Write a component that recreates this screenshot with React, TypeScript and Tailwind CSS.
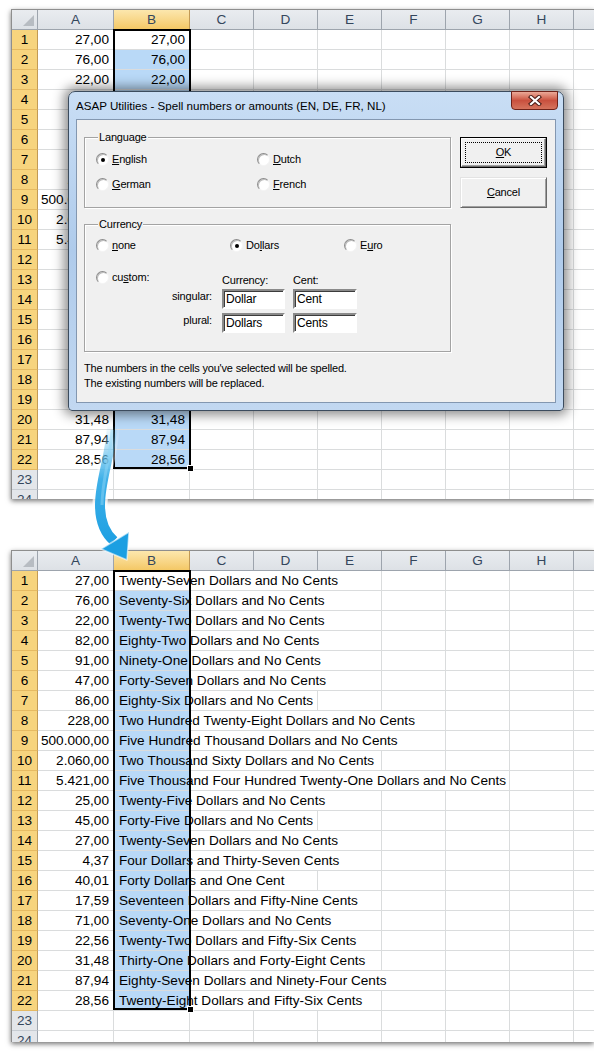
import React from "react";

type Row = { a: string; words: string; reach: number };

// reach: last column (after B) the spelled text runs into: C=1, D=2, E=3, F=4, G=5
const rows: Row[] = [
  { a: "27,00", words: "Twenty-Seven Dollars and No Cents", reach: 3 },
  { a: "76,00", words: "Seventy-Six Dollars and No Cents", reach: 3 },
  { a: "22,00", words: "Twenty-Two Dollars and No Cents", reach: 3 },
  { a: "82,00", words: "Eighty-Two Dollars and No Cents", reach: 3 },
  { a: "91,00", words: "Ninety-One Dollars and No Cents", reach: 3 },
  { a: "47,00", words: "Forty-Seven Dollars and No Cents", reach: 3 },
  { a: "86,00", words: "Eighty-Six Dollars and No Cents", reach: 2 },
  { a: "228,00", words: "Two Hundred Twenty-Eight Dollars and No Cents", reach: 4 },
  { a: "500.000,00", words: "Five Hundred Thousand Dollars and No Cents", reach: 4 },
  { a: "2.060,00", words: "Two Thousand Sixty Dollars and No Cents", reach: 3 },
  { a: "5.421,00", words: "Five Thousand Four Hundred Twenty-One Dollars and No Cents", reach: 5 },
  { a: "25,00", words: "Twenty-Five Dollars and No Cents", reach: 3 },
  { a: "45,00", words: "Forty-Five Dollars and No Cents", reach: 2 },
  { a: "27,00", words: "Twenty-Seven Dollars and No Cents", reach: 3 },
  { a: "4,37", words: "Four Dollars and Thirty-Seven Cents", reach: 3 },
  { a: "40,01", words: "Forty Dollars and One Cent", reach: 2 },
  { a: "17,59", words: "Seventeen Dollars and Fifty-Nine Cents", reach: 3 },
  { a: "71,00", words: "Seventy-One Dollars and No Cents", reach: 3 },
  { a: "22,56", words: "Twenty-Two Dollars and Fifty-Six Cents", reach: 3 },
  { a: "31,48", words: "Thirty-One Dollars and Forty-Eight Cents", reach: 3 },
  { a: "87,94", words: "Eighty-Seven Dollars and Ninety-Four Cents", reach: 4 },
  { a: "28,56", words: "Twenty-Eight Dollars and Fifty-Six Cents", reach: 3 },
];

const rest = ["C", "D", "E", "F", "G", "H", "I"];

function HeaderRow() {
  return (
    <div className="flex h-[20px] border-b border-[#9da4ad] bg-gradient-to-b from-[#e9ecf0] to-[#dde1e6] text-[#34465c]">
      <div className="flex h-full w-[26px] shrink-0 items-end justify-end border-r border-[#9da4ad] pb-[3px] pr-[3px]">
        <div className="h-0 w-0 border-b-[11px] border-l-[11px] border-b-[#b7bcc2] border-l-transparent" />
      </div>
      <div className="flex h-full w-[76px] shrink-0 items-center justify-center border-r border-[#9da4ad]">A</div>
      <div className="flex h-full w-[76px] shrink-0 items-center justify-center border-r border-[#c29a55] bg-gradient-to-b from-[#fce7ad] to-[#f4c865]">
        B
      </div>
      {rest.map((c) => (
        <div key={c} className="flex h-full w-[64px] shrink-0 items-center justify-center border-r border-[#9da4ad]">
          {c}
        </div>
      ))}
    </div>
  );
}

function RowHead({ n, selected }: { n: number; selected: boolean }) {
  return (
    <div
      className={
        selected
          ? "flex h-full w-[26px] shrink-0 items-center justify-center border-b border-r border-b-[#e6ba62] border-r-[#c29a55] bg-[#f7d47e]"
          : "flex h-full w-[26px] shrink-0 items-center justify-center border-b border-r border-b-[#c7ccd2] border-r-[#9da4ad] bg-[#e3e6ea] text-[#34465c]"
      }
    >
      {n}
    </div>
  );
}

function Sheet({ spelled }: { spelled: boolean }) {
  return (
    <div className="relative ml-[11px] w-[583px] overflow-hidden border-l border-t border-[#8e8e8e] bg-white text-[13.6px] leading-[19px] text-black shadow-[0_2px_5px_rgba(0,0,0,0.55)]">
      <div className={spelled ? "h-[491px]" : "h-[489px]"}>
        <HeaderRow />
        {rows.map((r, i) => (
          <div key={i} className="flex h-[20px]">
            <RowHead n={i + 1} selected />
            <div className="h-full w-[76px] shrink-0 border-b border-r border-[#dadcdd] pr-[4px] text-right">{r.a}</div>
            {spelled ? (
              <div
                className={
                  i === 0
                    ? "h-full w-[76px] shrink-0 overflow-visible whitespace-nowrap border-b border-[#dadcdd] bg-white pl-[5px]"
                    : "h-full w-[76px] shrink-0 overflow-visible whitespace-nowrap border-b border-[#dadcdd] bg-[#b9d9f7] pl-[5px]"
                }
              >
                {r.words}
              </div>
            ) : (
              <div
                className={
                  i === 0
                    ? "h-full w-[76px] shrink-0 border-b border-r border-[#dadcdd] bg-white pr-[4px] text-right"
                    : "h-full w-[76px] shrink-0 border-b border-r border-[#dadcdd] bg-[#b9d9f7] pr-[4px] text-right"
                }
              >
                {r.a}
              </div>
            )}
            {rest.map((c, k) => (
              <div
                key={c}
                className={
                  spelled && k + 1 < r.reach
                    ? "h-full w-[64px] shrink-0 border-b border-[#dadcdd]"
                    : "h-full w-[64px] shrink-0 border-b border-r border-[#dadcdd]"
                }
              />
            ))}
          </div>
        ))}
        {[23, 24].map((n) => (
          <div key={n} className="flex h-[20px]">
            <RowHead n={n} selected={false} />
            <div className="h-full w-[76px] shrink-0 border-b border-r border-[#dadcdd]" />
            <div className="h-full w-[76px] shrink-0 border-b border-r border-[#dadcdd]" />
            {rest.map((c) => (
              <div key={c} className="h-full w-[64px] shrink-0 border-b border-r border-[#dadcdd]" />
            ))}
          </div>
        ))}
      </div>
      {/* selection frame + fill handle */}
      <div className="pointer-events-none absolute left-[101px] top-[19px] h-[440px] w-[78px] border-2 border-black" />
      <div className="absolute left-[175px] top-[455px] h-[7px] w-[7px] border border-white bg-black" />
    </div>
  );
}

function Radio({ checked }: { checked?: boolean }) {
  return (
    <span className="flex h-[13px] w-[13px] shrink-0 items-center justify-center rounded-full border border-b-[#f4f4f4] border-l-[#8c8c8c] border-r-[#f4f4f4] border-t-[#8c8c8c] bg-white shadow-[inset_1px_1px_0_#bdbdbd]">
      {checked && <span className="h-[4px] w-[4px] rounded-full bg-black" />}
    </span>
  );
}

function Option({ children, checked }: { children: React.ReactNode; checked?: boolean }) {
  return (
    <div className="flex h-[13px] items-center gap-[3px] leading-[13px]">
      <Radio checked={checked} />
      <span>{children}</span>
    </div>
  );
}

function Field({ value }: { value: string }) {
  return (
    <div className="flex h-[20px] items-center border-2 border-b-white border-l-[#8a8a8a] border-r-white border-t-[#8a8a8a] bg-white pl-[2px] text-[12px] shadow-[inset_1px_1px_0_#3c3c3c]">
      {value}
    </div>
  );
}

function Dialog() {
  return (
    <div className="absolute left-[68px] top-[91px] h-[320px] w-[496px] rounded-b-[4px] rounded-t-[7px] border border-[#3c4c5e] bg-gradient-to-b from-[#c9def5] via-[#afcbeb] to-[#c2d8f1] font-['Liberation_Sans',Arial,sans-serif] text-[11px] tracking-[-0.18px] text-black shadow-[0_0_12px_4px_rgba(0,0,0,0.45)]">
      <div className="flex h-[27px] items-center pl-[7px] text-[11.6px] tracking-normal">
        ASAP Utilities - Spell numbers or amounts (EN, DE, FR, NL)
      </div>
      <div className="absolute right-[5px] top-[-1px] flex h-[19px] w-[47px] items-center justify-center rounded-b-[4px] border border-[#6f2219] bg-gradient-to-b from-[#eaa998] via-[#c9503e] to-[#d5735d]">
        <svg width="14" height="11" viewBox="0 0 14 11">
          <path d="M3 2 L11 9 M11 2 L3 9" stroke="#4a1c16" strokeWidth="4.2" strokeLinecap="square" />
          <path d="M3 2 L11 9 M11 2 L3 9" stroke="#fff" strokeWidth="2.2" strokeLinecap="square" />
        </svg>
      </div>
      <div className="mx-[7px] flex h-[284px] gap-[9px] border border-[#8397b0] bg-[#f0f0f0] pl-[7px] pt-[17px]">
        <div className="w-[367px]">
          <div className="relative h-[71px] border border-[#a3a3a3] shadow-[inset_1px_1px_0_#fff,1px_1px_0_#fff]">
            <span className="absolute left-[13px] top-[-8px] bg-[#f0f0f0] px-px leading-[14px]">Language</span>
            <div className="grid grid-cols-[161px_1fr] gap-y-[12px] pl-[11px] pt-[15px]">
              <Option checked>
                <u>E</u>nglish
              </Option>
              <Option>
                <u>D</u>utch
              </Option>
              <Option>
                <u>G</u>erman
              </Option>
              <Option>
                <u>F</u>rench
              </Option>
            </div>
          </div>
          <div className="relative mt-[16px] h-[128px] border border-[#a3a3a3] shadow-[inset_1px_1px_0_#fff,1px_1px_0_#fff]">
            <span className="absolute left-[13px] top-[-8px] bg-[#f0f0f0] px-px leading-[14px]">Currency</span>
            <div className="grid grid-cols-[134px_114px_1fr] pl-[11px] pt-[14px]">
              <Option>
                <u>n</u>one
              </Option>
              <Option checked>
                Do<u>l</u>lars
              </Option>
              <Option>
                E<u>u</u>ro
              </Option>
            </div>
            <div className="mt-[19px] grid grid-cols-[126px_71px_64px] grid-rows-[18px_22px_24px] pl-[11px]">
              <Option>
                cu<u>s</u>tom:
              </Option>
              <span className="mt-[2px] leading-[14px]">Currency:</span>
              <span className="mt-[2px] leading-[14px]">Cent:</span>
              <span className="pr-[10px] text-right leading-[14px]">singular:</span>
              <div className="w-[63px]">
                <Field value="Dollar" />
              </div>
              <Field value="Cent" />
              <span className="mt-[2px] pr-[10px] text-right leading-[14px]">plural:</span>
              <div className="mt-[2px] w-[63px]">
                <Field value="Dollars" />
              </div>
              <div className="mt-[2px]">
                <Field value="Cents" />
              </div>
            </div>
          </div>
          <p className="mt-[9px] leading-[15px]">
            The numbers in the cells you've selected will be spelled.
            <br />
            The existing numbers will be replaced.
          </p>
        </div>
        <div className="flex flex-col gap-[9px]">
          <div className="h-[31px] w-[87px] border border-black">
            <div className="flex h-full w-full items-center justify-center border border-b-[#696969] border-l-white border-r-[#696969] border-t-white shadow-[inset_-1px_-1px_0_#a0a0a0]">
              <div className="flex h-[21px] w-[77px] items-center justify-center border border-dotted border-black">
                <u>O</u>K
              </div>
            </div>
          </div>
          <div className="flex h-[31px] w-[87px] items-center justify-center border border-b-[#696969] border-l-[#e3e3e3] border-r-[#696969] border-t-[#e3e3e3] shadow-[inset_1px_1px_0_#fff,inset_-1px_-1px_0_#a0a0a0]">
            <u>C</u>ancel
          </div>
        </div>
      </div>
    </div>
  );
}

function Arrow() {
  const d = "M112 426 C111 455 100 480 100 505 C100 522 106 534 114 541";
  return (
    <svg className="pointer-events-none absolute left-0 top-0" width="594" height="1053" viewBox="0 0 594 1053">
      <defs>
        <linearGradient id="stem" x1="0" y1="425" x2="0" y2="545" gradientUnits="userSpaceOnUse">
          <stop offset="0" stopColor="#2aa8e6" stopOpacity="0" />
          <stop offset="0.45" stopColor="#2aa8e6" stopOpacity="0.9" />
          <stop offset="1" stopColor="#1c9fe2" stopOpacity="1" />
        </linearGradient>
        <linearGradient id="halo" x1="0" y1="425" x2="0" y2="545" gradientUnits="userSpaceOnUse">
          <stop offset="0" stopColor="#fff" stopOpacity="0" />
          <stop offset="0.5" stopColor="#fff" stopOpacity="0.7" />
          <stop offset="1" stopColor="#fff" stopOpacity="0.8" />
        </linearGradient>
      </defs>
      <path d={d} fill="none" stroke="url(#halo)" strokeWidth="15" />
      <path d={d} fill="none" stroke="url(#stem)" strokeWidth="10" />
      <path d="M112 430 C111 455 102 480 102 505" fill="none" stroke="#8fd6f6" strokeOpacity="0.5" strokeWidth="3" />
      <polygon points="101,549 129,532 127,560" fill="#1c9fe2" stroke="#ffffff" strokeOpacity="0.6" strokeWidth="1.5" strokeLinejoin="round" />
    </svg>
  );
}

export default function App() {
  return (
    <div className="relative h-[1053px] w-[594px] overflow-hidden bg-white pt-[9px] font-['Liberation_Sans',Arial,sans-serif]">
      <Sheet spelled={false} />
      <div className="mt-[51px]">
        <Sheet spelled />
      </div>
      <Dialog />
      <Arrow />
    </div>
  );
}
